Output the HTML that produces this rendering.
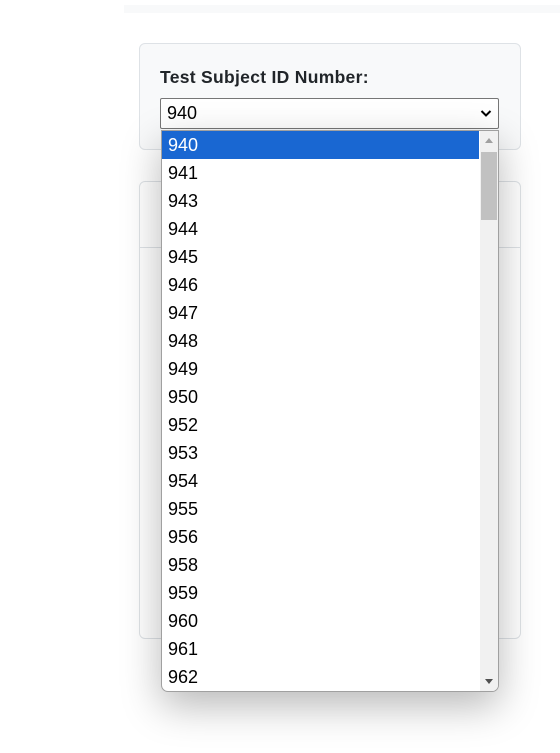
<!DOCTYPE html>
<html><head><style>
body{margin:0;width:560px;height:753px;background:#fff;position:relative;overflow:hidden;font-family:"Liberation Sans",sans-serif;}
.bar{position:absolute;left:124px;top:5px;width:436px;height:8px;background:#f8f9fa}
.card{position:absolute;left:139px;width:380px;border:1px solid #dee2e6;border-radius:6px;background:#f8f9fa}
.lbl{position:absolute;left:160px;top:67px;font-size:17.5px;font-weight:bold;color:#212529;letter-spacing:0.3px}
.sel{position:absolute;left:160px;top:98px;width:337px;height:29px;border:1px solid #767676;border-radius:2px;background:#fff;font-size:18px;line-height:29px;box-sizing:content-box}
.sel span{position:absolute;left:6px;top:0}
.dd{position:absolute;left:161px;top:130px;width:336px;height:560px;border:1px solid #a0a0a0;border-radius:0 0 7px 7px;background:#fff;overflow:hidden;box-shadow:0 14px 40px rgba(0,0,0,0.28)}
.row{height:28px;line-height:28px;padding-left:6px;font-size:18px;color:#000;width:311px}
.row.a{background:#1967d2;color:#fff}
.sb{position:absolute;right:0;top:0;width:18px;height:100%;background:#f1f1f1}
.th{position:absolute;left:1px;top:21px;width:16px;height:68px;background:#c1c1c1}
</style></head><body>
<div class="bar"></div>
<div class="card" style="top:43px;height:105px"></div>
<div class="card" style="top:181px;height:456px;background:#fff"><div style="position:absolute;left:0;right:0;top:65px;border-top:1px solid #dee2e6"></div></div>
<div class="lbl">Test Subject ID Number:</div>
<div class="sel"><span>940</span><svg style="position:absolute;right:6px;top:10px" width="12" height="9" viewBox="0 0 12 9"><path d="M1.5 2 L6 6.5 L10.5 2" stroke="#000" stroke-width="2" fill="none"/></svg></div>
<div class="dd">
<div class="row a">940</div><div class="row">941</div><div class="row">943</div><div class="row">944</div><div class="row">945</div><div class="row">946</div><div class="row">947</div><div class="row">948</div><div class="row">949</div><div class="row">950</div><div class="row">952</div><div class="row">953</div><div class="row">954</div><div class="row">955</div><div class="row">956</div><div class="row">958</div><div class="row">959</div><div class="row">960</div><div class="row">961</div><div class="row">962</div>
<div class="sb"><div class="th"></div>
<svg style="position:absolute;left:5px;top:7px" width="8" height="5"><path d="M0 5L4 0L8 5Z" fill="#a0a0a0"/></svg>
<svg style="position:absolute;left:5px;bottom:7px" width="8" height="5"><path d="M0 0L4 5L8 0Z" fill="#505050"/></svg>
</div></div>
</body></html>
